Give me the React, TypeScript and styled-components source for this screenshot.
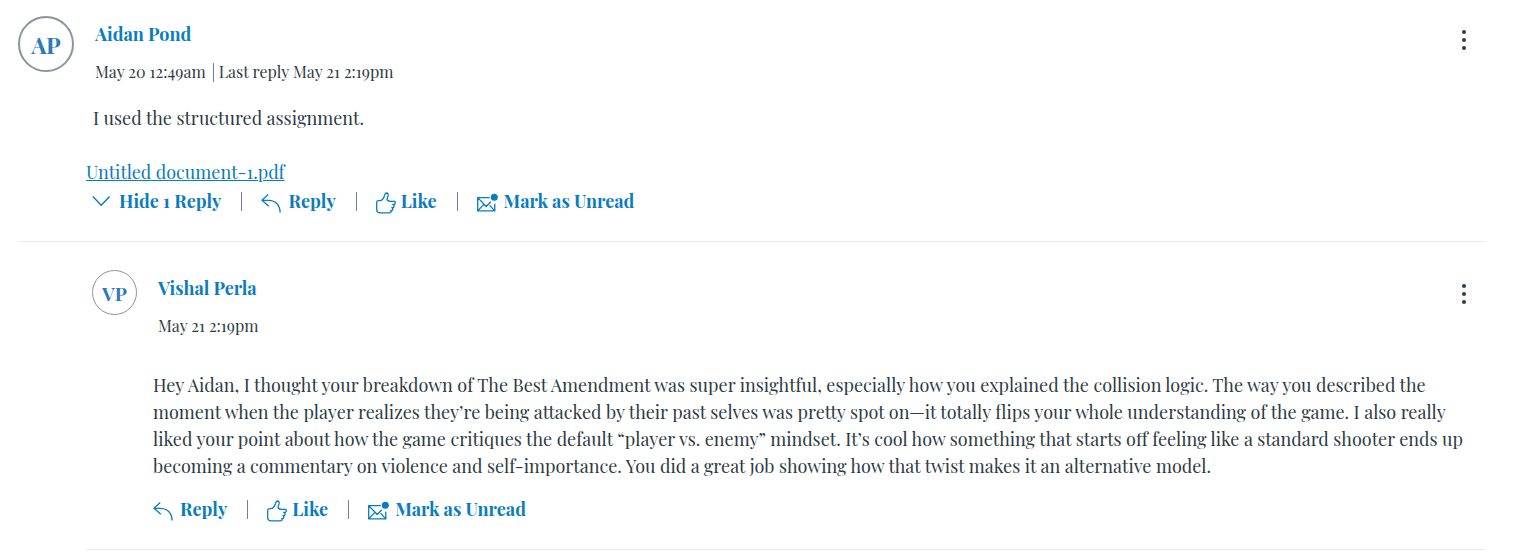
import React from "react";
import styled, { createGlobalStyle } from "styled-components";

const GlobalStyle = createGlobalStyle`
  *, *::before, *::after { box-sizing: border-box; }
  body {
    margin: 0;
    background: #ffffff;
    color: #2d3b45;
    font-family: "Playfair Display", "Liberation Serif", serif;
  }
  p, h2 { margin: 0; }
`;

const Thread = styled.main`
  padding: 16px 42px 0 18px;
`;

const Entry = styled.article<{ $nested?: boolean }>`
  margin-left: ${(p) => (p.$nested ? 68 : 0)}px;
  padding: ${(p) => (p.$nested ? "28px 0 26px 6px" : "0 0 26px")};
  border-bottom: 1px solid #e8eaec;
`;

const Header = styled.header`
  display: flex;
  align-items: flex-start;
  gap: 21px;
`;

const Avatar = styled.div<{ $small?: boolean }>`
  flex: none;
  display: flex;
  align-items: center;
  justify-content: center;
  width: ${(p) => (p.$small ? 45 : 56)}px;
  height: ${(p) => (p.$small ? 45 : 56)}px;
  border: ${(p) => (p.$small ? 1 : 2)}px solid #8b949e;
  border-radius: 50%;
  color: #2b7abc;
  font-size: ${(p) => (p.$small ? 19 : 23)}px;
  font-weight: 700;
`;

const Identity = styled.div`
  flex: 1;
  padding-top: 5px;
`;

const Author = styled.h2`
  font-size: 18px;
  line-height: 26px;
`;

const AuthorLink = styled.a`
  color: #0a7cc1;
  text-decoration: none;
`;

const Meta = styled.p`
  display: flex;
  align-items: center;
  margin-top: 13px;
  font-size: 16px;
  line-height: 24px;
`;

const MetaDivider = styled.span`
  width: 1px;
  height: 19px;
  margin: 0 5px 0 7px;
  background: #7479ae;
`;

const MenuButton = styled.button`
  display: flex;
  width: 24px;
  height: 24px;
  margin: 12px 10px 0 0;
  padding: 0;
  border: 0;
  background: none;
  color: #2d3b45;
  cursor: pointer;
`;

const Message = styled.p<{ $nested?: boolean }>`
  margin: ${(p) => (p.$nested ? "34px 0 0 61px" : "21px 0 0 75px")};
  font-size: 18px;
  line-height: 27px;
`;

const Attachment = styled.a`
  display: block;
  width: fit-content;
  margin: 27px 0 0 68px;
  color: #0a7cc1;
  font-size: 18px;
  line-height: 27px;
`;

const Actions = styled.div<{ $nested?: boolean }>`
  display: flex;
  align-items: center;
  margin: ${(p) => (p.$nested ? "14px 0 0 61px" : "0 0 0 74px")};
  padding-top: 1px;
`;

const Action = styled.button<{ $gap?: number }>`
  display: flex;
  align-items: center;
  gap: ${(p) => p.$gap ?? 7}px;
  padding: 0;
  border: 0;
  background: none;
  color: #0a7cc1;
  font: 700 18px/28px "Playfair Display", "Liberation Serif", serif;
  white-space: nowrap;
  cursor: pointer;

  & + & {
    margin-left: 20px;
    padding-left: 20px;
    background: linear-gradient(#7479ae, #7479ae) left center / 1px 19px no-repeat;
  }
`;

const Icon = styled.svg<{ $lowered?: boolean }>`
  flex: none;
  margin-top: ${(p) => (p.$lowered ? 4 : 0)}px;
  fill: none;
  stroke: currentColor;
`;

const MoreIcon = () => (
  <Icon width="24" height="24" viewBox="0 0 24 24" aria-hidden="true">
    <g fill="currentColor" stroke="none">
      <circle cx="12" cy="4" r="2" />
      <circle cx="12" cy="12" r="2" />
      <circle cx="12" cy="20" r="2" />
    </g>
  </Icon>
);

const ChevronIcon = () => (
  <Icon width="20" height="20" viewBox="0 0 20 20" strokeWidth="1.4" aria-hidden="true">
    <path d="M.8 5.5 9.2 14.2 17.6 5.5" />
  </Icon>
);

const ReplyIcon = () => (
  <Icon $lowered width="20" height="20" viewBox="0 0 20 20" strokeWidth="1.3" aria-hidden="true">
    <path d="M7.2 1.5 1 7.3l6.8 6M1.2 7.3h6.3c7 .2 11.6 4.8 11.6 12.2" />
  </Icon>
);

const LikeIcon = () => (
  <Icon $lowered width="20" height="22" viewBox="0 0 20 22" strokeWidth="1.3" strokeLinejoin="round" aria-hidden="true">
    <path d="M.7 10.4c0-1 .8-1.7 1.8-1.7h1.7c2.2-.7 3.7-3.2 4.4-5.5.3-1.5.8-2.2 1.8-2.2 1.6.1 2 1.2 1.6 2.9L11 7.7c1.1 1.2 2.7 1.8 4.4 1.6l3.4.1c.8 1 .7 2.2-.5 3l-1.5.1c1.6.4 1.7 1.9.5 3.2h-1.4c1.2.6 1.1 2.1-.2 3h-1c.9.9.4 2-1.2 2.1H4.1c-2 0-3.3-1-3.4-2.8z" />
  </Icon>
);

const UnreadIcon = () => (
  <Icon $lowered width="22" height="20" viewBox="0 0 22 20" strokeWidth="1.3" aria-hidden="true">
    <path d="M12.7 4.6H.7v13.3h17.1v-7.2M1.2 5.1l8 8.4 4.6-4.7M1.2 17.4l5.6-6M17.3 17.4l-4.8-5.3" />
    <circle cx="17.3" cy="4.3" r="3.5" fill="currentColor" stroke="none" />
  </Icon>
);

const CommonActions = () => (
  <>
    <Action type="button"><ReplyIcon />Reply</Action>
    <Action type="button" $gap={5}><LikeIcon />Like</Action>
    <Action type="button" $gap={5}><UnreadIcon />Mark as Unread</Action>
  </>
);

type EntryHeaderProps = {
  name: string;
  initials: string;
  posted: string;
  lastReply?: string;
  small?: boolean;
};

const EntryHeader = ({ name, initials, posted, lastReply, small }: EntryHeaderProps) => (
  <Header>
    <Avatar $small={small} aria-hidden="true">{initials}</Avatar>
    <Identity>
      <Author><AuthorLink href="#profile">{name}</AuthorLink></Author>
      <Meta>
        <span>{posted}</span>
        {lastReply && (
          <>
            <MetaDivider />
            <span>{lastReply}</span>
          </>
        )}
      </Meta>
    </Identity>
    <MenuButton type="button" aria-label={`Manage discussion by ${name}`}>
      <MoreIcon />
    </MenuButton>
  </Header>
);

export default function App() {
  return (
    <>
      <GlobalStyle />
      <Thread>
        <Entry>
          <EntryHeader
            name="Aidan Pond"
            initials="AP"
            posted="May 20 12:49am"
            lastReply="Last reply May 21 2:19pm"
          />
          <Message>I used the structured assignment.</Message>
          <Attachment href="#attachment">Untitled document-1.pdf</Attachment>
          <Actions>
            <Action type="button"><ChevronIcon />Hide 1 Reply</Action>
            <CommonActions />
          </Actions>
        </Entry>
        <Entry $nested>
          <EntryHeader name="Vishal Perla" initials="VP" posted="May 21 2:19pm" small />
          <Message $nested>
            Hey Aidan, I thought your breakdown of The Best Amendment was super insightful, especially how you explained the collision logic. The way you described the
            moment when the player realizes they’re being attacked by their past selves was pretty spot on—it totally flips your whole understanding of the game. I also really
            liked your point about how the game critiques the default “player vs. enemy” mindset. It’s cool how something that starts off feeling like a standard shooter ends up
            becoming a commentary on violence and self-importance. You did a great job showing how that twist makes it an alternative model.
          </Message>
          <Actions $nested>
            <CommonActions />
          </Actions>
        </Entry>
      </Thread>
    </>
  );
}
